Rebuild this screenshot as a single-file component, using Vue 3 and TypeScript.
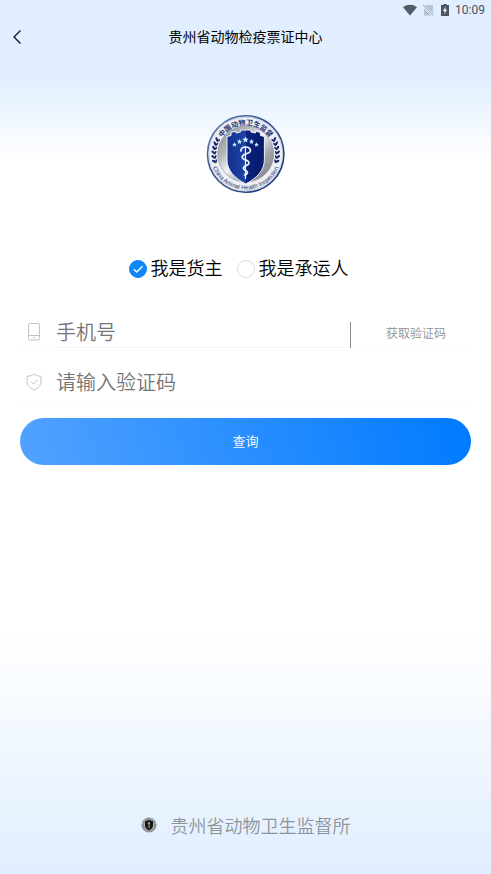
<script setup lang="ts">
import { ref } from 'vue'

type Role = 'owner' | 'carrier'

const roles: { value: Role; label: string }[] = [
  { value: 'owner', label: '我是货主' },
  { value: 'carrier', label: '我是承运人' },
]

const role = ref<Role>('owner')
const phone = ref('')
const code = ref('')

const leaves = [-20, -12, -4, 4, 12, 20]
const stars = [
  { x: 34.5, y: 36.5, size: 0.85 },
  { x: 39.5, y: 33.5, size: 0.95 },
  { x: 45.5, y: 31.5, size: 1.15 },
  { x: 51.5, y: 33.5, size: 0.95 },
  { x: 56.5, y: 36.5, size: 0.85 },
]
</script>

<template>
  <div class="page">
    <div class="status">
      <svg class="wifi" width="16" height="12" viewBox="0 0 16 12" aria-hidden="true">
        <path d="M1 3.200C5-.1 11-.1 15 3.200L8 11.500z" fill="#535b65" />
      </svg>
      <svg width="12" height="12" viewBox="0 0 12 12" aria-hidden="true">
        <path d="M4 1h7v10.500H2V3z" fill="#b9c3cf" />
        <path d="M.5 1l11 10.500" stroke="#e0eeff" stroke-width="2.400" />
        <path d="M.8.8l10.700 10.700" stroke="#9ca6b2" />
      </svg>
      <svg class="battery" width="8" height="12" viewBox="0 0 8 12" aria-hidden="true">
        <path d="M2.500 0h3v1H8v11H0V1h2.500z" fill="#4c545e" />
        <path d="M4.800 2.500L2 7h1.700l-.5 3.200L6 5.800H4.300z" fill="#fff" />
      </svg>
      <span>10:09</span>
    </div>

    <header class="header">
      <button class="back" type="button" aria-label="返回">
        <svg width="10" height="16" viewBox="0 0 10 16" aria-hidden="true">
          <path d="M8.500 1.500L2 8l6.500 6.500" fill="none" stroke="#111820" stroke-width="1.400" />
        </svg>
      </button>
      <h1>贵州省动物检疫票证中心</h1>
    </header>

    <main class="main">
      <svg class="emblem" width="92" height="92" viewBox="0 0 92 92" role="img" aria-label="中国动物卫生监督">
        <defs>
          <linearGradient id="silver" x1="0" y1="0" x2="1" y2="1">
            <stop offset="0" stop-color="#85888d" />
            <stop offset=".3" stop-color="#b5b7ba" />
            <stop offset=".48" stop-color="#f3f4f5" />
            <stop offset=".7" stop-color="#a0a3a7" />
            <stop offset="1" stop-color="#777b80" />
          </linearGradient>
          <linearGradient id="rim" x1="0" y1="0" x2="1" y2="1">
            <stop offset="0" stop-color="#5379b4" />
            <stop offset="1" stop-color="#17296c" />
          </linearGradient>
          <linearGradient id="navy" x1="0" y1="0" x2="1" y2="0">
            <stop offset="0" stop-color="#12308c" />
            <stop offset=".5" stop-color="#1f45a8" />
            <stop offset=".52" stop-color="#0a2280" />
            <stop offset="1" stop-color="#061a68" />
          </linearGradient>
          <path id="arcTop" d="M16.700 46a29 29 0 0 1 58 0" />
          <path id="arcBottom" d="M10.200 46a35.500 35.500 0 0 0 71 0" />
        </defs>
        <circle cx="45.700" cy="46" r="38.200" fill="#eef0f5" stroke="url(#rim)" stroke-width="1.600" />
        <circle cx="45.700" cy="46" r="36.800" fill="none" stroke="#b8bdca" stroke-width=".6" />
        <circle cx="45.700" cy="46" r="28" fill="url(#silver)" stroke="#858b98" stroke-width=".6" />
        <path
          d="M27 28.500l4-1v-3l5-1.500v2l4.500-1v-2h10.400v2l4.500 1v-2l5 1.500v3l4 1v23c0 11-7.500 18.500-18.700 24.500C34.500 70 27 62.500 27 51.500z"
          fill="url(#navy)"
          stroke="#eef1f8"
          stroke-width="1"
        />
        <text class="arc-cn"><textPath href="#arcTop" startOffset="50%" text-anchor="middle">中国动物卫生监督</textPath></text>
        <text class="arc-en"><textPath href="#arcBottom" startOffset="50%" text-anchor="middle">China Animal Health Inspection</textPath></text>
        <g v-for="a in leaves" :key="a" fill="#17236b">
          <g :transform="`rotate(${a} 45.700 46) translate(14.200 43)`">
            <ellipse cx="-1.300" cy="0" rx="2.200" ry="1.100" transform="rotate(50)" />
            <ellipse cx="1" cy=".8" rx="2" ry=".9" transform="rotate(-55)" />
          </g>
          <g :transform="`rotate(${a} 45.700 46) translate(77.200 43)`">
            <ellipse cx="1.300" cy="0" rx="2.200" ry="1.100" transform="rotate(-50)" />
            <ellipse cx="-1" cy=".8" rx="2" ry=".9" transform="rotate(55)" />
          </g>
        </g>
        <path
          v-for="s in stars"
          :key="s.x"
          d="M0-2.600l.8 1.700 1.900.2-1.400 1.300.4 1.900L0 1.600l-1.700.9.4-1.900-1.400-1.300 1.900-.2z"
          fill="#c5ecff"
          :transform="`translate(${s.x} ${s.y}) scale(${s.size})`"
        />
        <g fill="none" stroke="#f5f8ff" stroke-linecap="round">
          <path d="M45.500 39v31.500" stroke-width="1.200" />
          <path d="M41 43c-.8-2.500 2-4 4.500-4 3.500 0 5.500 2 4.800 4.200-.8 2.300-4 2.300-6 3.300-3.200 1.600-2.600 4.300.7 5.300 3 .9 4.500 1.800 3.800 3.900-.7 2-5.800 2-5.300 4.800.4 2 4 1.900 4 4 0 1.500-1.500 2-3 2.500" stroke-width="1.700" />
        </g>
      </svg>

      <form class="form" @submit.prevent>
        <div class="roles" role="radiogroup" aria-label="身份">
          <label v-for="item in roles" :key="item.value" class="role">
            <span class="radio">
              <input v-model="role" type="radio" name="role" :value="item.value" />
              <svg v-if="role === item.value" width="18" height="18" viewBox="0 0 18 18" aria-hidden="true">
                <path d="M4.800 9.300l2.900 2.700 5.800-5.800" fill="none" stroke="#fff" stroke-width="1.400" />
              </svg>
            </span>
            <span>{{ item.label }}</span>
          </label>
        </div>

        <div class="row">
          <label class="icon" for="phone" aria-label="手机号">
            <svg width="16" height="18" viewBox="0 0 16 18" fill="none" stroke="#c4c4c4" aria-hidden="true">
              <rect x="2.500" y=".5" width="11" height="16.500" rx="1.500" />
              <path d="M2.500 12.500h11M7 14.800h2" />
            </svg>
          </label>
          <input id="phone" v-model="phone" class="field phone" type="tel" placeholder="手机号" />
          <button class="send" type="button">获取验证码</button>
        </div>

        <div class="row">
          <label class="icon" for="code" aria-label="验证码">
            <svg width="16" height="18" viewBox="0 0 16 18" fill="none" stroke="#c4c4c4" aria-hidden="true">
              <path d="M8 1c2 1.500 4.300 2.300 7 2.300V8c0 4.500-3 7.300-7 8.800C4 15.300 1 12.500 1 8V3.300C3.700 3.300 6 2.500 8 1z" />
              <path d="M4.800 8.600l2.500 2.400 4.200-4.300" />
            </svg>
          </label>
          <input id="code" v-model="code" class="field" type="text" placeholder="请输入验证码" />
        </div>

        <button class="submit" type="submit">查询</button>
      </form>
    </main>

    <footer class="footer">
      <svg width="16" height="16" viewBox="0 0 16 16" aria-hidden="true">
        <circle cx="8" cy="8" r="6.800" fill="#b5b8bc" stroke="#85888c" stroke-width="1.400" stroke-dasharray="1.800 .5" />
        <circle cx="8" cy="8" r="5.500" fill="none" stroke="#777" stroke-width=".8" />
        <path d="M4 4.300l4-1.300 4 1.300v4.200c0 2-1.500 3.500-4 4.700-2.500-1.200-4-2.700-4-4.700z" fill="#161616" />
        <path d="M8 5v6M6.800 6.200h2" stroke="#ccc" stroke-width=".9" />
      </svg>
      <span>贵州省动物卫生监督所</span>
    </footer>
  </div>
</template>

<style>
body {
  margin: 0;
}
</style>

<style scoped>
.page {
  box-sizing: border-box;
  min-height: 100vh;
  display: flex;
  flex-direction: column;
  font-family: 'Noto Sans CJK SC', sans-serif;
  font-weight: 350;
  color: #000;
  background:
    linear-gradient(to bottom, #e0eeff 76px, rgba(255, 255, 255, 0) 160px),
    linear-gradient(to top, #e0eeff 0, #fff 240px);
}

.page * {
  box-sizing: border-box;
}

button,
input {
  margin: 0;
  padding: 0;
  border: 0;
  background: none;
  font-family: inherit;
  font-weight: inherit;
}

.status {
  height: 20px;
  padding-right: 6px;
  display: flex;
  align-items: center;
  justify-content: flex-end;
  font-family: Roboto, sans-serif;
  font-size: 12px;
  font-weight: 400;
  color: #4c545e;
}

.wifi {
  margin-right: 4px;
}

.battery {
  margin: 0 6px 0 7px;
}

.header {
  height: 34px;
  display: grid;
  grid-template-columns: 34px 1fr 34px;
  align-items: center;
}

.back {
  height: 34px;
  display: flex;
  align-items: center;
  justify-content: center;
}

h1 {
  margin: 0;
  padding-bottom: 2px;
  font-size: 14px;
  line-height: 20px;
  font-weight: 400;
  text-align: center;
}

.main {
  flex: 1;
  padding: 54px 20px 0;
  display: flex;
  flex-direction: column;
  align-items: center;
}

.emblem {
  display: block;
}

.arc-cn {
  font-size: 7px;
  font-weight: 700;
  fill: #26336f;
}

.arc-en {
  font-family: 'Liberation Sans', sans-serif;
  font-size: 6px;
  fill: #26336f;
}

.form {
  width: 100%;
  margin-top: 53px;
  display: flex;
  flex-direction: column;
}

.roles {
  display: flex;
  justify-content: center;
  gap: 14px;
  padding-right: 14px;
  font-size: 18px;
  line-height: 28px;
}

.role {
  display: flex;
  align-items: center;
  gap: 4px;
}

.radio {
  display: grid;
  margin-top: 4px;
}

.radio > * {
  grid-area: 1 / 1;
}

.radio input {
  appearance: none;
  width: 18px;
  height: 18px;
  border: 1px solid #dcdcdc;
  border-radius: 50%;
}

.radio input:checked {
  border-color: #0f86fa;
  background: #0f86fa;
}

.radio svg {
  pointer-events: none;
}

.row {
  height: 38px;
  margin-top: 12px;
  display: flex;
  align-items: center;
  border-bottom: 1px solid #fbfbfb;
}

.roles + .row {
  margin-top: 32px;
}

.icon {
  width: 36px;
  padding-left: 6px;
  display: flex;
}

.field {
  flex: 1;
  min-width: 0;
  height: 32px;
  font-size: 20px;
  color: #333;
  outline: none;
}

.field::placeholder {
  color: #757575;
  opacity: 1;
}

.phone {
  border-bottom: 1px solid #f7f7f7;
}

.send {
  width: 121px;
  height: 26px;
  margin-top: 6px;
  padding: 0 0 4px 10px;
  border-left: 1px solid #8a8a8a;
  font-size: 12px;
  line-height: 18px;
  color: #8f8f8f;
}

.submit {
  height: 47px;
  margin-top: 17px;
  padding-bottom: 2px;
  border-radius: 24px;
  background: linear-gradient(75deg, #52a2ff, #007aff);
  font-size: 13px;
  color: #fff;
}

.footer {
  padding-bottom: 35px;
  display: flex;
  align-items: center;
  justify-content: center;
  gap: 14px;
  font-size: 18px;
  line-height: 28px;
  color: #8f949a;
}
</style>
